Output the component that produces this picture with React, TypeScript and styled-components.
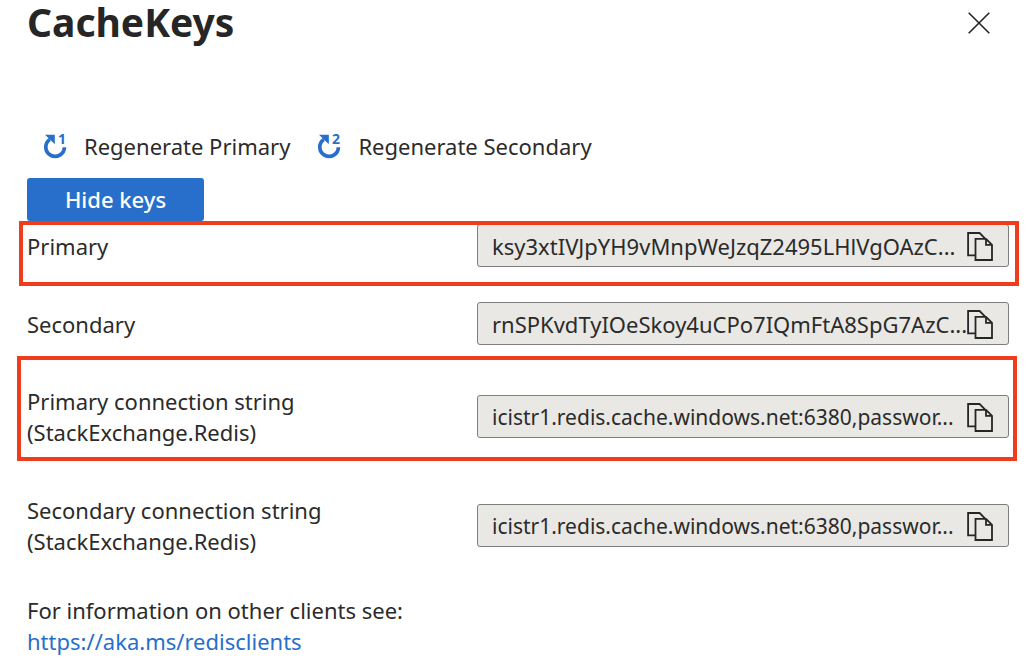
import React from "react";
import styled, { createGlobalStyle } from "styled-components";

const font = '"Segoe UI", "Noto Sans", sans-serif';

const GlobalStyle = createGlobalStyle`
  * { box-sizing: border-box; }
  body {
    margin: 0;
    background: #fff;
    color: #2b2b2b;
    font-family: ${font};
    font-size: 22px;
    line-height: 31px;
  }
  button, input { font: inherit; color: inherit; }
`;

const Panel = styled.main`
  padding: 0 23px 12px 27px;
`;

const Header = styled.header`
  display: flex;
  justify-content: space-between;
  align-items: flex-start;
  height: 46px;
`;

const Title = styled.h1`
  margin: 0;
  font-size: 39px;
  line-height: 43px;
  font-weight: 700;
  color: #262626;
`;

const IconButton = styled.button`
  display: flex;
  flex: none;
  padding: 0;
  border: 0;
  background: none;
  color: #262626;
  cursor: pointer;
`;

const CloseButton = styled(IconButton)`
  margin: 12px 19px 0 0;
`;

const Toolbar = styled.div`
  display: flex;
  gap: 27px;
  margin: 85px 0 16px;
  padding-left: 16px;
`;

const ToolButton = styled.button`
  display: flex;
  align-items: center;
  gap: 16px;
  padding: 0;
  border: 0;
  background: none;
  white-space: nowrap;
  cursor: pointer;

  svg {
    color: #276fca;
    overflow: visible;
  }
`;

const PrimaryButton = styled.button`
  display: block;
  width: 177px;
  height: 43px;
  padding: 0;
  border: 0;
  border-radius: 3px;
  background: #276fca;
  color: #fff;
  font-weight: 500;
  cursor: pointer;
`;

const Row = styled.div<{ $top: number }>`
  position: relative;
  display: flex;
  align-items: center;
  margin-top: ${(p) => p.$top}px;
`;

const Label = styled.label`
  flex: 0 0 450px;
  padding-top: 2px;
`;

const Field = styled.div`
  display: flex;
  flex: 1;
  align-items: center;
  min-width: 0;
  height: 43px;
  padding: 2px 15px 0 14px;
  border: 1px solid #7d7d7d;
  border-radius: 3px;
  background: #e9e8e4;
`;

const Value = styled.input<{ $compact: boolean }>`
  flex: 1;
  min-width: 0;
  margin-right: -2px;
  padding: 0;
  border: 0;
  outline: 0;
  background: none;
  font-size: ${(p) => (p.$compact ? 21 : 22)}px;
  text-overflow: ellipsis;
`;

const Highlight = styled.div<{ $left: number; $right: number; $top: number; $bottom: number }>`
  position: absolute;
  left: -${(p) => p.$left}px;
  right: -${(p) => p.$right}px;
  top: -${(p) => p.$top}px;
  bottom: -${(p) => p.$bottom}px;
  border: 4px solid #ee3c1c;
  pointer-events: none;
`;

const Footer = styled.p`
  margin: 38px 0 0;
`;

const Link = styled.a`
  color: #276fca;
  text-decoration: none;
`;

const RegenerateIcon = ({ digit }: { digit: number }) => (
  <svg width="25" height="27" viewBox="0 0 25 27" aria-hidden="true">
    <path d="M21.4 14.2A9.3 9.3 0 1 1 6.8 6.4" fill="none" stroke="currentColor" strokeWidth="3.7" />
    <path d="M2 1.8H11.8V11.2Z" fill="currentColor" />
    <text x="15" y="11" fontSize="14" fontWeight="700" fill="currentColor">
      {digit}
    </text>
  </svg>
);

const CopyIcon = () => (
  <svg width="26" height="29" viewBox="0 0 26 29" fill="none" stroke="currentColor" strokeWidth="1.8" aria-hidden="true">
    <path d="M8 23.4H1.1V1H12.6L18.4 6.8" />
    <path d="M8.5 6.9H19L25 12.8V28H8.5Z" />
    <path d="M19 7V12.8H25" />
  </svg>
);

const CloseIcon = () => (
  <svg width="22" height="22" viewBox="0 0 22 22" fill="none" stroke="currentColor" strokeWidth="1.6" aria-hidden="true">
    <path d="M.7 .7L21.3 21.3M21.3 .7L.7 21.3" />
  </svg>
);

type Frame = { left: number; right: number; top: number; bottom: number };
type Key = { id: string; label: string; note?: string; value: string; top: number; frame?: Frame };

const keys: Key[] = [
  {
    id: "primary",
    label: "Primary",
    value: "ksy3xtIVJpYH9vMnpWeJzqZ2495LHlVgOAzC...",
    top: 3,
    frame: { left: 8, right: 10, top: 3, bottom: 19 },
  },
  { id: "secondary", label: "Secondary", value: "rnSPKvdTyIOeSkoy4uCPo7IQmFtA8SpG7AzC...", top: 35 },
  {
    id: "primary-connection",
    label: "Primary connection string",
    note: "(StackExchange.Redis)",
    value: "icistr1.redis.cache.windows.net:6380,passwor...",
    top: 39,
    frame: { left: 10, right: 8, top: 28, bottom: 13 },
  },
  {
    id: "secondary-connection",
    label: "Secondary connection string",
    note: "(StackExchange.Redis)",
    value: "icistr1.redis.cache.windows.net:6380,passwor...",
    top: 45,
  },
];

export default function App() {
  return (
    <>
      <GlobalStyle />
      <Panel>
        <Header>
          <Title>CacheKeys</Title>
          <CloseButton type="button" aria-label="Close">
            <CloseIcon />
          </CloseButton>
        </Header>
        <Toolbar>
          <ToolButton type="button">
            <RegenerateIcon digit={1} />
            Regenerate Primary
          </ToolButton>
          <ToolButton type="button">
            <RegenerateIcon digit={2} />
            Regenerate Secondary
          </ToolButton>
        </Toolbar>
        <PrimaryButton type="button">Hide keys</PrimaryButton>
        {keys.map((k) => (
          <Row key={k.id} $top={k.top}>
            <Label htmlFor={k.id}>
              {k.label}
              {k.note && (
                <>
                  <br />
                  {k.note}
                </>
              )}
            </Label>
            <Field>
              <Value id={k.id} $compact={Boolean(k.note)} readOnly value={k.value} />
              <IconButton type="button" aria-label={`Copy ${k.label}`}>
                <CopyIcon />
              </IconButton>
            </Field>
            {k.frame && (
              <Highlight $left={k.frame.left} $right={k.frame.right} $top={k.frame.top} $bottom={k.frame.bottom} />
            )}
          </Row>
        ))}
        <Footer>
          For information on other clients see:
          <br />
          <Link href="https://aka.ms/redisclients">https://aka.ms/redisclients</Link>
        </Footer>
      </Panel>
    </>
  );
}
